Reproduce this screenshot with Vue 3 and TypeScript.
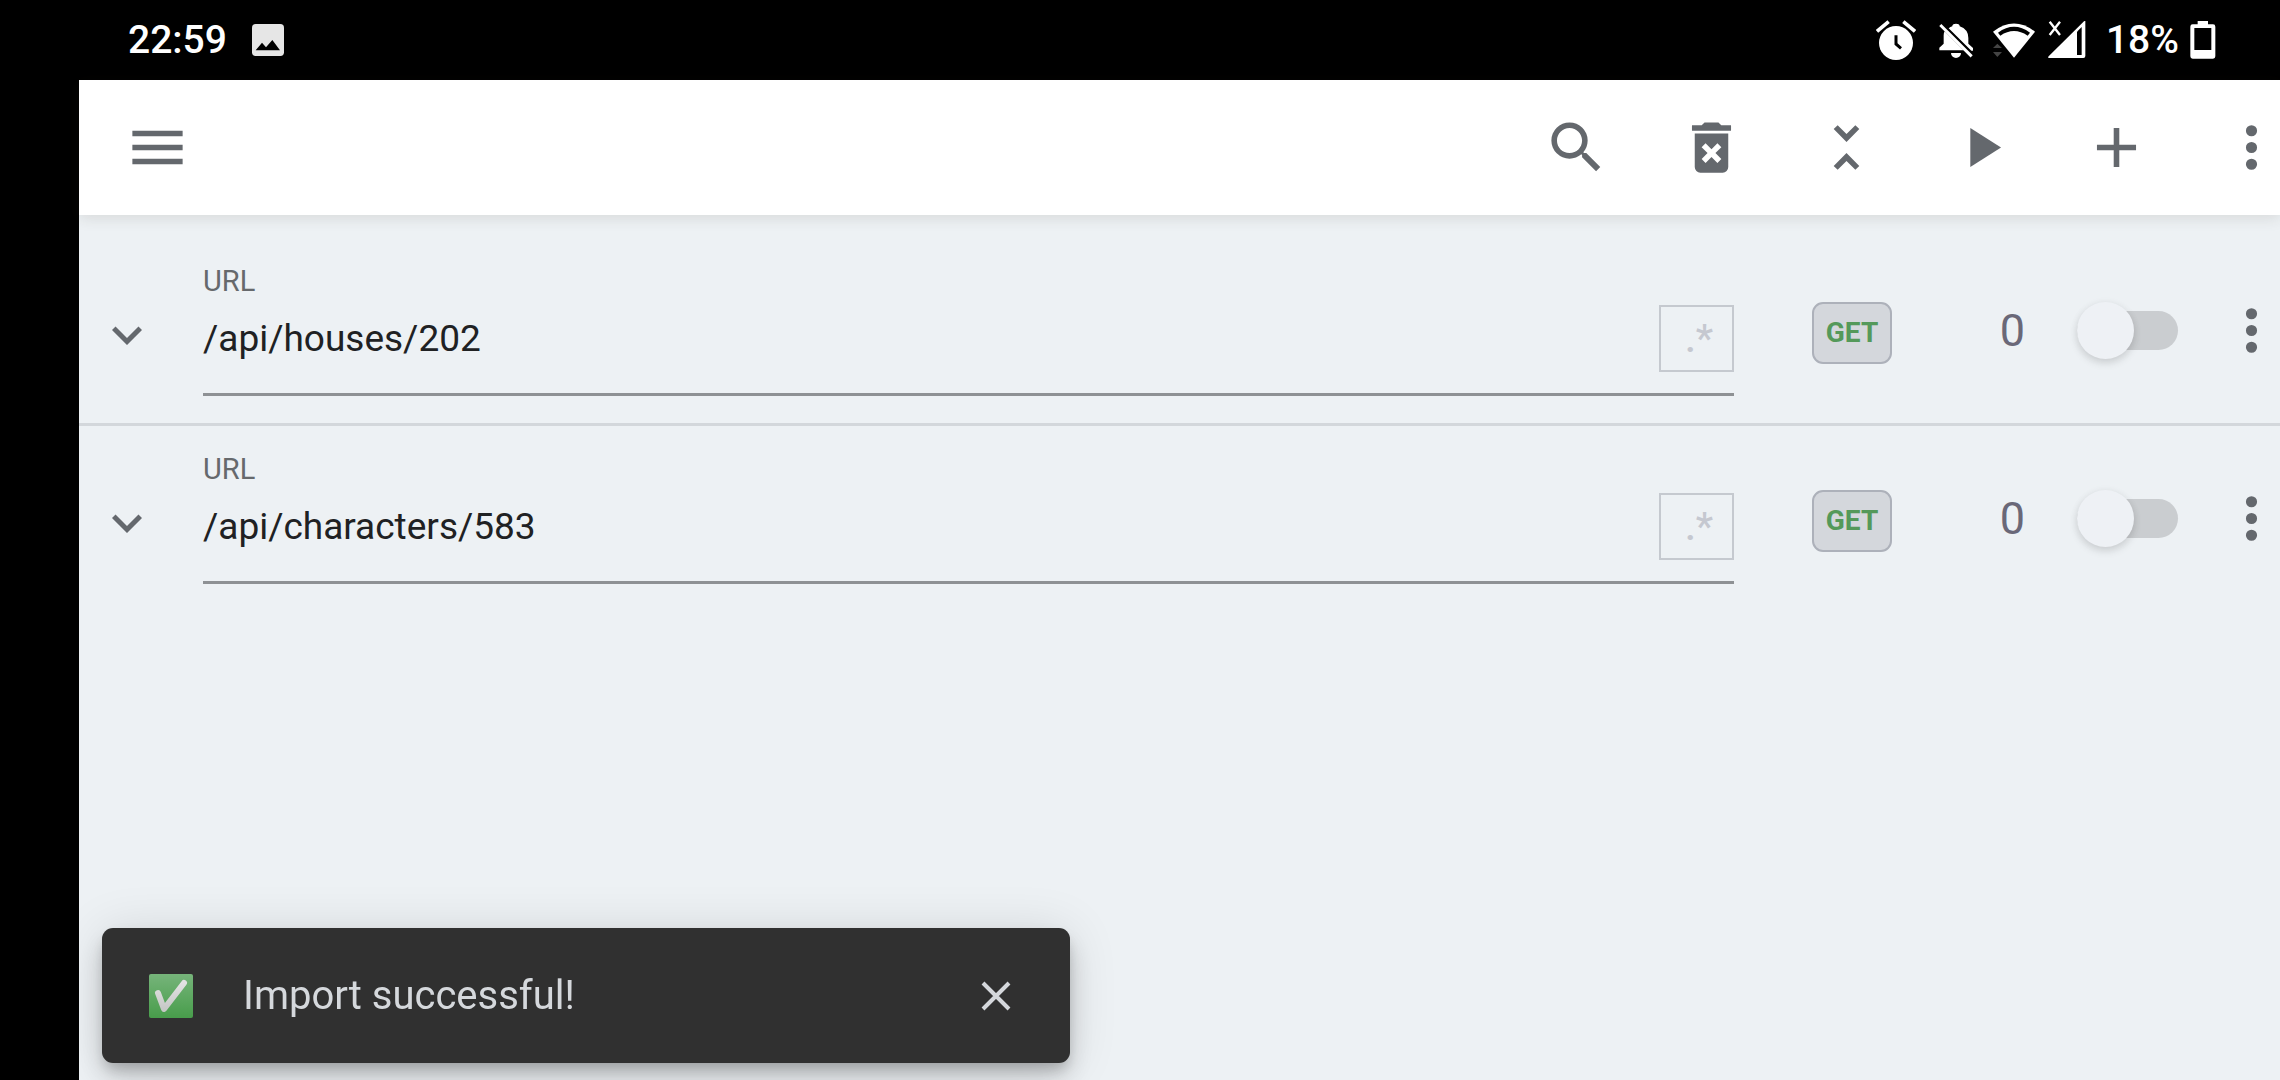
<script setup lang="ts">
import { ref } from 'vue'

interface Route {
  id: number
  url: string
  method: string
  hits: number
  enabled: boolean
}

interface Action {
  label: string
  path: string
}

const routes = ref<Route[]>([
  { id: 1, url: '/api/houses/202', method: 'GET', hits: 0, enabled: false },
  { id: 2, url: '/api/characters/583', method: 'GET', hits: 0, enabled: false },
])

const actions: Action[] = [
  {
    label: 'Search',
    path: 'M9.5,3A6.5,6.5 0 0,1 16,9.5C16,11.11 15.41,12.59 14.44,13.73L14.71,14H15.5L20.5,19L19,20.5L14,15.5V14.71L13.73,14.44C12.59,15.41 11.11,16 9.5,16A6.5,6.5 0 0,1 3,9.5A6.5,6.5 0 0,1 9.5,3M9.5,5C7,5 5,7 5,9.5C5,12 7,14 9.5,14C12,14 14,12 14,9.5C14,7 12,5 9.5,5Z',
  },
  {
    label: 'Delete all',
    path: 'M6,19A2,2 0 0,0 8,21H16A2,2 0 0,0 18,19V7H6V19M8.46,11.88L9.87,10.47L12,12.59L14.12,10.47L15.53,11.88L13.41,14L15.53,16.12L14.12,17.53L12,15.41L9.88,17.53L8.47,16.12L10.59,14L8.46,11.88M15.5,4L14.5,3H9.5L8.5,4H5V6H19V4H15.5Z',
  },
  {
    label: 'Collapse all',
    path: 'M16.59,5.41L15.17,4L12,7.17L8.83,4L7.41,5.41L12,10M7.41,18.59L8.83,20L12,16.83L15.17,20L16.58,18.59L12,14',
  },
  { label: 'Start', path: 'M8,5V19L19,12L8,5Z' },
  { label: 'Add', path: 'M19,13H13V19H11V13H5V11H11V5H13V11H19V13Z' },
]

const dots =
  'M12,16A2,2 0 0,1 14,18A2,2 0 0,1 12,20A2,2 0 0,1 10,18A2,2 0 0,1 12,16M12,10A2,2 0 0,1 14,12A2,2 0 0,1 12,14A2,2 0 0,1 10,12A2,2 0 0,1 12,10M12,4A2,2 0 0,1 14,6A2,2 0 0,1 12,8A2,2 0 0,1 10,6A2,2 0 0,1 12,4Z'

const snackOpen = ref(true)
</script>

<template>
  <div class="screen">
    <div class="status">
      <span class="clock">22:59</span>
      <svg class="picture" width="32" height="32" viewBox="0 0 96 96" aria-hidden="true">
        <rect width="96" height="96" rx="11" fill="#e6e6e6" />
        <path d="M11 79L30 56L42 70L61 48L84 79Z" fill="#000" />
      </svg>
      <span class="spacer"></span>
      <svg class="alarm" width="40" height="40" viewBox="108 60 120 120" aria-hidden="true">
        <circle cx="168" cy="129" r="51" fill="#fff" />
        <path d="M111 94L146 65M190 65L225 94" stroke="#fff" stroke-width="11" />
        <path d="M168 106V132L183 145" fill="none" stroke="#000" stroke-width="9" />
      </svg>
      <svg class="bell" width="36" height="40" viewBox="294 60 108 120" aria-hidden="true">
        <path
          d="M333 159H363A15 15 0 0 1 333 159ZM298 151V143L311 131V106Q311 99 314 94L371 151ZM326 85Q331 81 337 79V77Q338 71 348 71Q358 71 359 77V79Q385 88 385 114V131L399 144V152L394 152Z"
          fill="#fff"
        />
        <path d="M301 75L395 169" stroke="#fff" stroke-width="9" />
      </svg>
      <svg class="wifi" width="44" height="40" viewBox="456 60 132 120" aria-hidden="true">
        <path d="M459 95Q522 46 585 95L522 173Z" fill="#fff" />
        <path d="M474 98Q522 63 570 98L563 107Q522 79 481 107Z" fill="#000" />
        <path d="M459 144L472 131L486 144ZM459 156H486L472 171Z" fill="#444" />
      </svg>
      <svg class="signal" width="38" height="40" viewBox="624 60 114 120" aria-hidden="true">
        <path d="M736 63V168Q736 174 730 174H626Q623 172 626 169L732 64Q734 62 736 63Z" fill="#fff" />
        <path d="M711 95L725 81V165H711Z" fill="#000" />
        <path d="M629 65L660 105M660 65L629 105" stroke="#fff" stroke-width="7" />
      </svg>
      <span class="percent">18%</span>
      <svg class="battery" width="26" height="40" viewBox="1049 60 78 120" aria-hidden="true">
        <path
          d="M1072 63H1103V73H1118Q1125 73 1125 80V169Q1125 176 1118 176H1057Q1050 176 1050 169V80Q1050 73 1057 73H1072ZM1062 84V150H1113V84Z"
          fill="#fff"
          fill-rule="evenodd"
        />
      </svg>
    </div>

    <main class="app">
      <header class="toolbar">
        <button class="action" type="button" aria-label="Menu">
          <svg class="icon" viewBox="0 0 24 24"><path d="M3,6H21V8H3V6M3,11H21V13H3V11M3,16H21V18H3V16Z" /></svg>
        </button>
        <span class="spacer"></span>
        <button v-for="a in actions" :key="a.label" class="action" type="button" :aria-label="a.label">
          <svg class="icon" viewBox="0 0 24 24"><path :d="a.path" /></svg>
        </button>
        <button class="more toolbar-more" type="button" aria-label="More options">
          <svg class="dots" viewBox="8 0 8 24"><path :d="dots" /></svg>
        </button>
      </header>

      <ul class="list">
        <li v-for="r in routes" :key="r.id" class="route">
          <button class="expand" type="button" aria-label="Expand">
            <svg class="chevron" viewBox="0 0 24 24">
              <path d="M7.41,8.58L12,13.17L16.59,8.58L18,10L12,16L6,10L7.41,8.58Z" />
            </svg>
          </button>
          <div class="field">
            <label class="label" :for="`url-${r.id}`">URL</label>
            <div class="entry">
              <input :id="`url-${r.id}`" v-model="r.url" class="value" type="text" />
              <button class="regex" type="button" aria-label="Use regular expression">.*</button>
            </div>
          </div>
          <span class="method">{{ r.method }}</span>
          <span class="hits">{{ r.hits }}</span>
          <input v-model="r.enabled" class="switch" type="checkbox" role="switch" :aria-label="`Enable ${r.url}`" />
          <button class="more" type="button" aria-label="Route options">
            <svg class="dots" viewBox="8 0 8 24"><path :d="dots" /></svg>
          </button>
        </li>
      </ul>
    </main>

    <div v-if="snackOpen" class="snack" role="status">
      <svg class="check" width="44" height="44" viewBox="0 0 44 44" aria-hidden="true">
        <defs>
          <linearGradient id="tile" x1="0" y1="0" x2="0" y2="1">
            <stop offset="0" stop-color="#76b47a" />
            <stop offset="1" stop-color="#489d4b" />
          </linearGradient>
          <linearGradient id="tick" x1="0" y1="0" x2="0" y2="1">
            <stop offset="0" stop-color="#e2e2e2" />
            <stop offset="1" stop-color="#c6c8c6" />
          </linearGradient>
        </defs>
        <rect width="44" height="44" rx="2" fill="url(#tile)" />
        <path
          d="M9 19L15 35L35 9"
          fill="none"
          stroke="url(#tick)"
          stroke-width="6"
          stroke-linecap="round"
          stroke-linejoin="round"
        />
      </svg>
      <span class="message">Import successful!</span>
      <button class="close" type="button" aria-label="Dismiss" @click="snackOpen = false">
        <svg width="30" height="30" viewBox="0 0 30 30">
          <path d="M2 2L28 28M28 2L2 28" stroke="#d5d8dc" stroke-width="4" />
        </svg>
      </button>
    </div>
  </div>
</template>

<style>
body {
  margin: 0;
  background: #000;
}
</style>

<style scoped>
.screen {
  display: flex;
  flex-direction: column;
  box-sizing: border-box;
  min-height: 100vh;
  padding-left: 79px;
  overflow: hidden;
  background: #000;
  font-family: Roboto, sans-serif;
}

button {
  display: flex;
  align-items: center;
  justify-content: center;
  margin: 0;
  padding: 0;
  border: 0;
  background: none;
  font-family: inherit;
  cursor: pointer;
}

svg {
  display: block;
  flex: none;
}

.spacer {
  flex: 1;
}

.status {
  display: flex;
  align-items: center;
  height: 80px;
  padding: 0 64px 0 49px;
  color: #fff;
  font-size: 39px;
  font-weight: 500;
}

.picture {
  margin-left: 25px;
}

.bell {
  margin-left: 22px;
}

.wifi {
  margin-left: 18px;
}

.signal {
  margin-left: 12px;
}

.percent {
  margin-left: 20px;
}

.battery {
  margin-left: 11px;
}

.app {
  display: flex;
  flex: 1;
  flex-direction: column;
  background: #edf1f4;
}

.toolbar {
  z-index: 1;
  display: flex;
  align-items: center;
  height: 135px;
  padding-left: 11px;
  background: #fff;
  box-shadow: 0 3px 14px rgba(60, 50, 30, 0.12);
}

.action {
  width: 135px;
  height: 135px;
}

.icon {
  width: 67px;
  height: 67px;
  fill: #64686d;
}

.more {
  width: 58px;
  height: 96px;
}

.toolbar-more {
  margin-left: 38px;
}

.dots {
  width: 23px;
  height: 67px;
  fill: #64686d;
}

.list {
  margin: 0;
  padding: 23px 0 0;
  list-style: none;
}

.route {
  display: flex;
  align-items: center;
}

.route + .route {
  border-top: 3px solid #d3d7db;
}

.expand {
  width: 96px;
  height: 96px;
  padding-top: 8px;
}

.chevron {
  width: 60px;
  height: 60px;
  fill: #64686d;
}

.field {
  display: flex;
  flex: 1;
  flex-direction: column;
  gap: 8px;
  min-width: 0;
  margin: 27px 78px 27px 28px;
  padding-bottom: 21px;
  border-bottom: 3px solid #8e9194;
}

.label {
  color: #66696c;
  font-size: 29px;
  line-height: 32px;
}

.entry {
  display: flex;
  height: 67px;
}

.value {
  flex: 1;
  min-width: 0;
  padding: 0;
  border: 0;
  outline: 0;
  background: none;
  color: #202123;
  font-family: inherit;
  font-size: 37px;
}

.regex {
  box-sizing: border-box;
  width: 75px;
  padding-left: 5px;
  border: 2px solid #c5c9cf;
  color: #c5c8d0;
  font-size: 39px;
  font-weight: 500;
}

.method {
  box-sizing: border-box;
  width: 80px;
  margin-top: 5px;
  border: 2px solid #adb1ba;
  border-radius: 11px;
  background: #d4d7dc;
  color: #54995a;
  font-size: 28px;
  font-weight: 700;
  line-height: 58px;
  text-align: center;
}

.hits {
  width: 133px;
  color: #6a6878;
  font-size: 45px;
  text-align: right;
}

.switch {
  display: flex;
  align-items: center;
  width: 101px;
  height: 39px;
  margin: 0 44px 0 52px;
  border-radius: 20px;
  background: #cacdd0;
  appearance: none;
  cursor: pointer;
}

.switch::before {
  width: 57px;
  height: 57px;
  border-radius: 50%;
  background: #eef1f5;
  box-shadow: 0 4px 8px rgba(0, 0, 0, 0.12), 0 1px 8px rgba(0, 0, 0, 0.05);
  content: '';
}

.switch:checked {
  justify-content: flex-end;
  background: #a5cfa8;
}

.snack {
  position: fixed;
  bottom: 17px;
  left: 102px;
  z-index: 2;
  display: flex;
  align-items: center;
  box-sizing: border-box;
  width: 968px;
  max-width: calc(100vw - 124px);
  height: 135px;
  padding: 0 26px 0 47px;
  border-radius: 11px;
  background: #303030;
  box-shadow: 0 8px 14px -3px rgba(0, 0, 0, 0.2), 0 16px 28px rgba(0, 0, 0, 0.14), 0 3px 50px rgba(0, 0, 0, 0.12);
}

.message {
  flex: 1;
  margin-left: 50px;
  color: #d5d8dc;
  font-size: 40px;
}

.close {
  width: 96px;
  height: 96px;
}
</style>
